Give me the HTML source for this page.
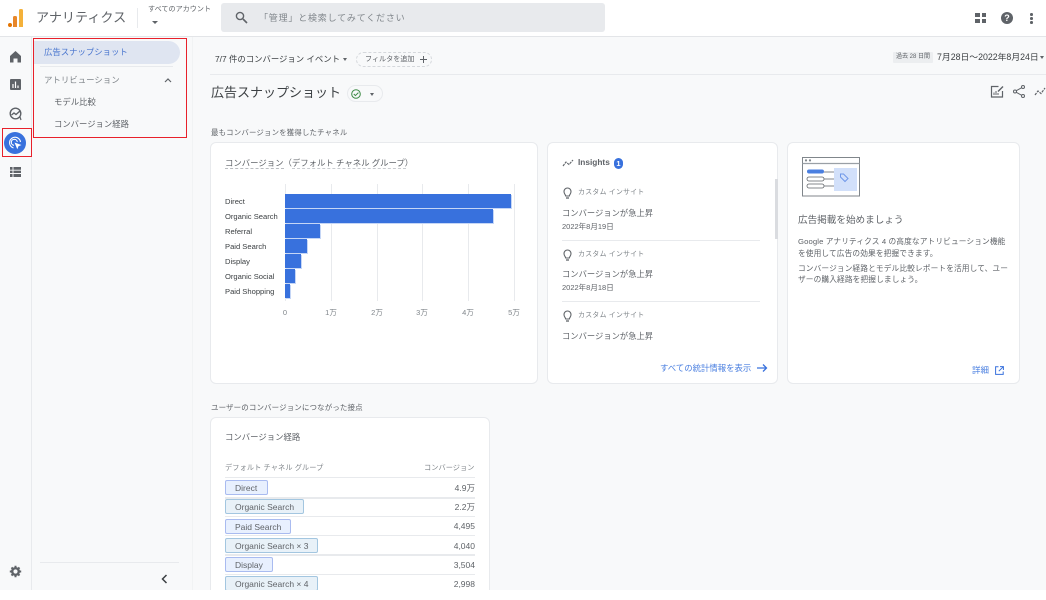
<!DOCTYPE html>
<html lang="ja"><head><meta charset="utf-8"><title>アナリティクス</title>
<style>
*{box-sizing:border-box}
html,body{margin:0;padding:0;width:1046px;height:600px;overflow:hidden;background:#fff}
body{font-family:"Liberation Sans","Noto Sans CJK JP",sans-serif;color:#5f6368}
#app{position:absolute;left:0;top:0;width:1046px;height:590px;background:#f8f9fa;overflow:hidden;filter:blur(.35px)}
.t{position:absolute;white-space:nowrap;line-height:1.2}
.a{position:absolute}
.card{position:absolute;background:#fff;border:1px solid #e8eaed;border-radius:6px}
svg{position:absolute;overflow:visible}
.bar{position:absolute;left:285px;height:13.5px;background:#3871dd;box-shadow:1px 1px 0 #c5d6f6}
.grid{position:absolute;top:184px;height:117px;width:1px;background:#e8eaed}
.lab{position:absolute;left:225px;font-size:7.6px;color:#3c4043;line-height:10px;white-space:nowrap;margin-top:.5px}
.ax{position:absolute;top:307.5px;font-size:7.5px;color:#80868b;line-height:10px;width:20px;text-align:center}
.chip{position:absolute;left:225px;height:15px;border-radius:2px;font-size:8.5px;line-height:14px;padding-left:9px;color:#5f6368;white-space:nowrap}
.c1{background:#e8f0fe;border:1px solid #a9bbf0}
.c2{background:#e8f1f8;border:1px solid #a3c6e0}
.val{position:absolute;left:420px;width:55px;text-align:right;font-size:8.5px;line-height:12px;color:#5f6368}
.ln{position:absolute;left:225px;width:250px;height:1px;background:#e8eaed}
</style></head><body><div id="app">

<!-- Header -->
<div class="a" style="left:0;top:0;width:1046px;height:37px;background:#fff;border-bottom:1px solid #e3e5e8"></div>
<div class="a" style="left:8px;top:22.5px;width:4px;height:4px;border-radius:2px;background:#e37400"></div>
<div class="a" style="left:13px;top:16px;width:4px;height:10.500px;border-radius:1.500px 1.500px 0 0;background:#e8872a"></div>
<div class="a" style="left:19px;top:9px;width:4px;height:17.500px;border-radius:1.500px 1.500px 0 0;background:#f4b13a"></div>
<div class="t" style="left:36px;top:10px;font-size:13.100px;color:#5f6368">アナリティクス</div>
<div class="a" style="left:137px;top:8px;width:1px;height:20px;background:#e8eaed"></div>
<div class="t" style="left:148px;top:5px;font-size:7.100px;color:#5f6368">すべてのアカウント</div>
<div class="a" style="left:152px;top:21px;border:3px solid transparent;border-top:3.5px solid #5f6368"></div>
<div class="a" style="left:221px;top:3px;width:384px;height:29px;background:#e8eaed;border-radius:3px"></div>
<svg style="left:235px;top:11px" width="13" height="13" viewBox="0 0 13 13"><circle cx="5" cy="5" r="3.600" fill="none" stroke="#5f6368" stroke-width="1.400"/><path d="M8 8l4 4" stroke="#5f6368" stroke-width="1.600"/></svg>
<div class="t" style="left:259px;top:12.5px;font-size:9px;letter-spacing:.8px;color:#80868b">「管理」と検索してみてください</div>

<div class="a" style="left:975px;top:13px;width:4.500px;height:4px;background:#5f6368"></div>
<div class="a" style="left:981.5px;top:13px;width:4.500px;height:4px;background:#5f6368"></div>
<div class="a" style="left:975px;top:19px;width:4.500px;height:4px;background:#5f6368"></div>
<div class="a" style="left:981.5px;top:19px;width:4.500px;height:4px;background:#5f6368"></div>
<div class="a" style="left:1001px;top:12px;width:12px;height:12px;border-radius:50%;background:#5f6368;color:#fff;font-size:9px;font-weight:bold;line-height:12px;text-align:center">?</div>
<div class="a" style="left:1030px;top:13px;width:2.500px;height:2.500px;border-radius:50%;background:#5f6368;box-shadow:0 4px 0 #5f6368,0 8px 0 #5f6368"></div>

<!-- Left rail -->
<div class="a" style="left:31px;top:37px;width:1px;height:553px;background:#e8eaed"></div>
<svg style="left:9px;top:50px" width="13" height="13" viewBox="0 0 13 13"><path d="M6.500 1L12 6v6.500H8.500V8.500h-4V12.500H1V6z" fill="#5f6368"/></svg>
<svg style="left:10px;top:79px" width="11" height="11" viewBox="0 0 11 11"><rect width="11" height="11" rx="1" fill="#5f6368"/><path d="M3 5v4M5.500 2.500V9M8 6.500V9" stroke="#fff" stroke-width="1.200"/></svg>
<svg style="left:9px;top:107px" width="13" height="14" viewBox="0 0 13 14"><circle cx="6.500" cy="6.500" r="5.300" fill="none" stroke="#5f6368" stroke-width="1.400"/><path d="M2.500 8l2.500-2 2 1.500L11 4" fill="none" stroke="#5f6368" stroke-width="1.400"/><path d="M11 10l1 3" stroke="#5f6368" stroke-width="1.200"/></svg>
<div class="a" style="left:4px;top:132px;width:22px;height:22px;border-radius:50%;background:#3871dd"></div>
<svg style="left:8px;top:136px" width="14" height="14" viewBox="0 0 14 14"><path d="M5.500 12A5.500 5.500 0 1 1 12.500 6" fill="none" stroke="#fff" stroke-width="1.100"/><path d="M6 9.300A3 3 0 1 1 9.300 6" fill="none" stroke="#fff" stroke-width="1.100"/><path d="M6.500 6.500l7 2.500-3 1.200-1.200 3z" fill="#fff"/></svg>
<div class="a" style="left:2px;top:128px;width:30px;height:29px;border:1.500px solid #e8212b"></div>
<svg style="left:10px;top:167px" width="11" height="10" viewBox="0 0 11 10"><rect width="11" height="10" fill="#5f6368"/><path d="M0 3.200h11M0 6.500h11M3 0v10" stroke="#f8f9fa" stroke-width=".9"/></svg>
<svg style="left:9px;top:565px" width="13" height="13" viewBox="0 0 13 13"><circle cx="6.500" cy="6.500" r="3.300" fill="none" stroke="#5f6368" stroke-width="2.400"/><path d="M6.500 .8v2.200M6.500 10v2.200M.8 6.500H3M10 6.500h2.200M2.500 2.500l1.500 1.500M9 9l1.500 1.500M2.500 10.500L4 9M9 4l1.500-1.500" stroke="#5f6368" stroke-width="2"/></svg>

<!-- Sidebar -->
<div class="a" style="left:192px;top:37px;width:1px;height:553px;background:#f1f3f4"></div>
<div class="a" style="left:34px;top:41px;width:146px;height:23px;background:#dfe5f1;border-radius:0 12px 12px 0"></div>
<div class="t" style="left:44px;top:47px;font-size:8.400px;color:#4a76cf">広告スナップショット</div>
<div class="a" style="left:40px;top:66px;width:133px;height:1px;background:#e8eaed"></div>
<div class="t" style="left:44px;top:75px;font-size:8.440px;color:#80868b">アトリビューション</div>
<svg style="left:164px;top:77px" width="8" height="6" viewBox="0 0 8 6"><path d="M1 5l3-3 3 3" fill="none" stroke="#5f6368" stroke-width="1.200"/></svg>
<div class="t" style="left:54px;top:97px;font-size:8.400px;color:#5f6368">モデル比較</div>
<div class="t" style="left:54px;top:119px;font-size:8.350px;color:#5f6368">コンバージョン経路</div>
<div class="a" style="left:33px;top:38px;width:154px;height:100px;border:1.500px solid #e8212b"></div>
<div class="a" style="left:40px;top:562px;width:139px;height:1px;background:#e8eaed"></div>
<svg style="left:161px;top:574px" width="7" height="10" viewBox="0 0 7 10"><path d="M5.500 1L1.500 5l4 4" fill="none" stroke="#3c4043" stroke-width="1.500"/></svg>

<!-- Filter bar -->
<div class="a" style="left:210px;top:74px;width:836px;height:1px;background:#e8eaed"></div>
<div class="t" style="left:215px;top:54px;font-size:8.400px;color:#3c4043">7/7 件のコンバージョン イベント</div>
<div class="a" style="left:343px;top:58px;border:2.500px solid transparent;border-top:3px solid #5f6368"></div>
<div class="a" style="left:356px;top:52px;width:76px;height:15px;border:1px dashed #d5d8dc;border-radius:8px"></div>
<div class="t" style="left:365px;top:55px;font-size:7.100px;color:#5f6368">フィルタを追加</div>
<svg style="left:419px;top:55px" width="9" height="9" viewBox="0 0 9 9"><path d="M4.500 1v7M1 4.500h7" stroke="#5f6368"/></svg>
<div class="a" style="left:893px;top:52px;width:40px;height:11px;background:#eceef0;border-radius:1px"></div>
<div class="t" style="left:896px;top:54px;font-size:6px;color:#5f6368">過去 28 日間</div>
<div class="t" style="left:937px;top:52px;font-size:8.800px;color:#3c4043">7月28日～2022年8月24日</div>
<div class="a" style="left:1040px;top:56px;border:2.500px solid transparent;border-top:3px solid #5f6368"></div>

<!-- Title -->
<div class="t" style="left:211px;top:85px;font-size:13px;color:#3c4043">広告スナップショット</div>
<div class="a" style="left:347px;top:85px;width:36px;height:17px;border:1px solid #e8eaed;border-radius:9px"></div>
<svg style="left:351px;top:89px" width="10" height="10" viewBox="0 0 10 10"><circle cx="5" cy="5" r="4.300" fill="none" stroke="#3c8a45" stroke-width="1"/><path d="M2.800 5l1.600 1.600 3-3" fill="none" stroke="#3c8a45" stroke-width="1"/></svg>
<div class="a" style="left:369.500px;top:92.500px;border:2.500px solid transparent;border-top:3px solid #5f6368"></div>
<svg style="left:991px;top:85px" width="13" height="13" viewBox="0 0 13 13"><path d="M11.500 6v6h-11V1.500h7" fill="none" stroke="#5f6368" stroke-width="1.200"/><path d="M3 10V7.500M5 10V6M7 10V8" stroke="#5f6368"/><path d="M6.500 6l5-5 1 1-5 5z" fill="#5f6368"/></svg>
<svg style="left:1013px;top:85px" width="12" height="13" viewBox="0 0 12 13"><circle cx="2" cy="6.500" r="1.500" fill="none" stroke="#5f6368"/><circle cx="10" cy="2" r="1.500" fill="none" stroke="#5f6368"/><circle cx="10" cy="11" r="1.500" fill="none" stroke="#5f6368"/><path d="M3.300 5.700l5.400-3M3.300 7.300l5.400 3" stroke="#5f6368"/></svg>
<svg style="left:1034px;top:86px" width="12" height="11" viewBox="0 0 12 11"><path d="M1 9l3-4 3 2.500L11 2" fill="none" stroke="#5f6368" stroke-width="1.200" stroke-dasharray="2.500 1"/></svg>

<div class="t" style="left:211px;top:128.5px;font-size:7.400px;letter-spacing:.2px;color:#5f6368">最もコンバージョンを獲得したチャネル</div>

<!-- Card 1 -->
<div class="card" style="left:210px;top:142px;width:328px;height:242px"></div>
<div class="t" style="left:225px;top:157.5px;font-size:8.400px;color:#5f6368">コンバージョン（デフォルト チャネル グループ）</div>
<div class="a" style="left:225px;top:168px;width:59px;border-top:1px dashed #b9bcc0"></div>
<div class="a" style="left:292px;top:168px;width:114px;border-top:1px dashed #c9ccd0"></div>
<div class="grid" style="left:285px"></div><div class="grid" style="left:331px"></div><div class="grid" style="left:377px"></div><div class="grid" style="left:422px"></div><div class="grid" style="left:468px"></div><div class="grid" style="left:514px"></div>
<div class="bar" style="top:194px;width:225.500px"></div>
<div class="bar" style="top:209px;width:208px"></div>
<div class="bar" style="top:224px;width:35px"></div>
<div class="bar" style="top:239px;width:22px"></div>
<div class="bar" style="top:254px;width:16px"></div>
<div class="bar" style="top:269px;width:10px"></div>
<div class="bar" style="top:284px;width:4.500px"></div>
<div class="lab" style="top:196px">Direct</div>
<div class="lab" style="top:211px">Organic Search</div>
<div class="lab" style="top:226px">Referral</div>
<div class="lab" style="top:241px">Paid Search</div>
<div class="lab" style="top:256px">Display</div>
<div class="lab" style="top:271px">Organic Social</div>
<div class="lab" style="top:286px">Paid Shopping</div>
<div class="ax" style="left:275px">0</div><div class="ax" style="left:321px">1万</div><div class="ax" style="left:367px">2万</div><div class="ax" style="left:412px">3万</div><div class="ax" style="left:458px">4万</div><div class="ax" style="left:504px">5万</div>

<!-- Card 2 -->
<div class="card" style="left:547px;top:142px;width:231px;height:242px"></div>
<svg style="left:562px;top:158px" width="12" height="10" viewBox="0 0 12 10"><path d="M1 8l3-4 3 2.500L11 2" fill="none" stroke="#5f6368" stroke-width="1.100" stroke-dasharray="2.500 .8"/></svg>
<div class="t" style="left:578px;top:158px;font-size:8.300px;font-weight:bold;color:#5f6368">Insights</div>
<div class="a" style="left:614px;top:158px;width:9px;height:11px;border-radius:4.500px;background:#3871dd;color:#fff;font-size:7.500px;font-weight:bold;line-height:11px;text-align:center">1</div>
<div class="a" style="left:775px;top:179px;width:3px;height:60px;background:#dadce0"></div>
<svg style="left:563px;top:187px" width="9" height="13" viewBox="0 0 9 13"><path d="M2.700 9C2.500 7.500 1 7 1 4.500a3.500 3.500 0 0 1 7 0C8 7 6.500 7.500 6.300 9z" fill="none" stroke="#5f6368" stroke-width="1.100"/><path d="M3 11h3" stroke="#5f6368" stroke-width="1.300"/></svg>
<div class="t" style="left:578px;top:189px;font-size:7px;letter-spacing:.15px;color:#80868b">カスタム インサイト</div>
<div class="t" style="left:562px;top:209px;font-size:8.300px;color:#5f6368">コンバージョンが急上昇</div>
<div class="t" style="left:562px;top:221.500px;font-size:7.500px;color:#5f6368">2022年8月19日</div>
<div class="a" style="left:562px;top:240px;width:198px;height:1px;background:#e8eaed"></div>
<svg style="left:563px;top:249px" width="9" height="13" viewBox="0 0 9 13"><path d="M2.700 9C2.500 7.500 1 7 1 4.500a3.500 3.500 0 0 1 7 0C8 7 6.500 7.500 6.300 9z" fill="none" stroke="#5f6368" stroke-width="1.100"/><path d="M3 11h3" stroke="#5f6368" stroke-width="1.300"/></svg>
<div class="t" style="left:578px;top:251px;font-size:7px;letter-spacing:.15px;color:#80868b">カスタム インサイト</div>
<div class="t" style="left:562px;top:270px;font-size:8.300px;color:#5f6368">コンバージョンが急上昇</div>
<div class="t" style="left:562px;top:282.500px;font-size:7.500px;color:#5f6368">2022年8月18日</div>
<div class="a" style="left:562px;top:301px;width:198px;height:1px;background:#e8eaed"></div>
<svg style="left:563px;top:310px" width="9" height="13" viewBox="0 0 9 13"><path d="M2.700 9C2.500 7.500 1 7 1 4.500a3.500 3.500 0 0 1 7 0C8 7 6.500 7.500 6.300 9z" fill="none" stroke="#5f6368" stroke-width="1.100"/><path d="M3 11h3" stroke="#5f6368" stroke-width="1.300"/></svg>
<div class="t" style="left:578px;top:312px;font-size:7px;letter-spacing:.15px;color:#80868b">カスタム インサイト</div>
<div class="t" style="left:562px;top:332px;font-size:8.300px;color:#5f6368">コンバージョンが急上昇</div>
<div class="t" style="left:660px;top:362.500px;font-size:8.400px;color:#4a7fe0">すべての統計情報を表示</div>
<svg style="left:757px;top:363px" width="11" height="10" viewBox="0 0 11 10"><path d="M0 5h9.500M6 1.500L9.500 5 6 8.500" fill="none" stroke="#3871dd" stroke-width="1.300"/></svg>

<!-- Card 3 -->
<div class="card" style="left:787px;top:142px;width:233px;height:242px"></div>
<svg style="left:801px;top:157px" width="60" height="40" viewBox="0 0 60 40">
<rect x="1.500" y=".5" width="57" height="38.500" fill="#fff" stroke="#80868b" stroke-width="1"/>
<path d="M1.500 6.500h57" stroke="#9aa0a6" stroke-width="1.200"/>
<circle cx="5" cy="3.400" r="1.100" fill="#80868b"/><circle cx="9" cy="3.400" r="1.100" fill="#80868b"/>
<rect x="33" y="11" width="23" height="23" fill="#d2e0fa"/>
<path d="M23 15h10M23 22h10M23 29h10" stroke="#80868b"/>
<rect x="6" y="12.500" width="17" height="4" rx="2" fill="#4a7fe0"/>
<rect x="6" y="20" width="17" height="4" rx="2" fill="#fff" stroke="#5f6368" stroke-width=".8"/>
<rect x="6" y="27" width="17" height="4" rx="2" fill="#fff" stroke="#5f6368" stroke-width=".8"/>
<path d="M39.500 20v-3h3l4.500 4.500-3 3z" fill="none" stroke="#6f97e8"/>
</svg>
<div class="t" style="left:798px;top:214.500px;font-size:9.600px;color:#5f6368">広告掲載を始めましょう</div>
<div class="t" style="left:798px;top:236.500px;font-size:7.700px;letter-spacing:.12px;color:#5f6368">Google アナリティクス 4 の高度なアトリビューション機能</div>
<div class="t" style="left:798px;top:248.500px;font-size:7.700px;letter-spacing:.12px;color:#5f6368">を使用して広告の効果を把握できます。</div>
<div class="t" style="left:798px;top:263.500px;font-size:7.700px;letter-spacing:.12px;color:#5f6368">コンバージョン経路とモデル比較レポートを活用して、ユー</div>
<div class="t" style="left:798px;top:274.500px;font-size:7.700px;letter-spacing:.12px;color:#5f6368">ザーの購入経路を把握しましょう。</div>
<div class="t" style="left:972px;top:365px;font-size:8.500px;color:#4a7fe0">詳細</div>
<svg style="left:995px;top:366px" width="9" height="9" viewBox="0 0 9 9"><path d="M3.500 .8H.6v7.600h7.600V5.500" fill="none" stroke="#3871dd" stroke-width="1"/><path d="M5 .6h3.400V4M8.200.8L3.800 5.200" fill="none" stroke="#3871dd" stroke-width="1"/></svg>

<!-- Section 2 -->
<div class="t" style="left:211px;top:402.500px;font-size:7.500px;letter-spacing:.1px;color:#5f6368">ユーザーのコンバージョンにつながった接点</div>
<div class="card" style="left:210px;top:417px;width:280px;height:190px"></div>
<div class="t" style="left:225px;top:432px;font-size:8.400px;color:#5f6368">コンバージョン経路</div>
<div class="t" style="left:225px;top:464px;font-size:7.200px;letter-spacing:.1px;color:#80868b">デフォルト チャネル グループ</div>
<div class="t" style="left:424px;top:464px;font-size:7.200px;letter-spacing:.05px;color:#80868b">コンバージョン</div>
<div class="ln" style="top:477px"></div>
<div class="chip c1" style="top:480px;width:43px">Direct</div><div class="val" style="top:482px">4.9万</div>
<div class="ln" style="top:497px;height:2px"></div>
<div class="chip c2" style="top:499px;width:79px">Organic Search</div><div class="val" style="top:501px">2.2万</div>
<div class="ln" style="top:516px"></div>
<div class="chip c1" style="top:519px;width:66px">Paid Search</div><div class="val" style="top:520px">4,495</div>
<div class="ln" style="top:535px"></div>
<div class="chip c2" style="top:538px;width:93px">Organic Search × 3</div><div class="val" style="top:540px">4,040</div>
<div class="ln" style="top:554px;height:2px"></div>
<div class="chip c1" style="top:557px;width:48px">Display</div><div class="val" style="top:559px">3,504</div>
<div class="ln" style="top:574px"></div>
<div class="chip c2" style="top:576px;width:93px">Organic Search × 4</div><div class="val" style="top:578px">2,998</div>

</div></body></html>
